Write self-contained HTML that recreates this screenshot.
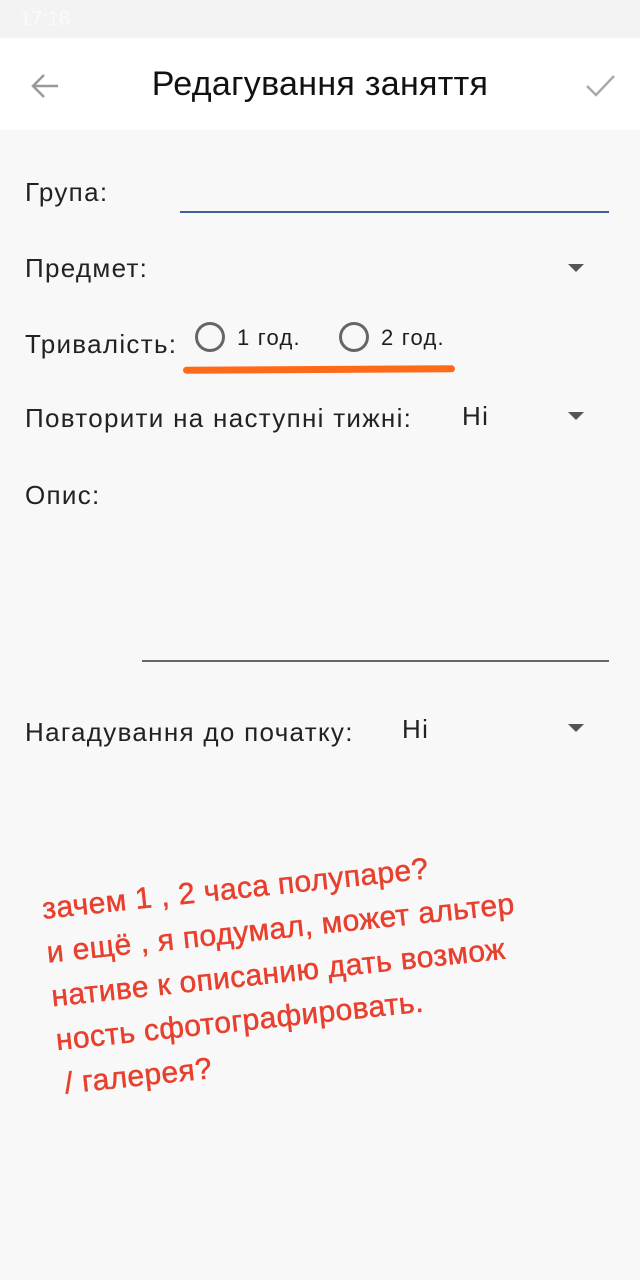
<!DOCTYPE html>
<html><head><meta charset="utf-8"><style>
*{margin:0;padding:0;box-sizing:border-box}
body{width:640px;height:1280px;background:#f8f8f8;font-family:"Liberation Sans","DejaVu Sans",sans-serif;position:relative;overflow:hidden;color:#1e1e1e}
.a{position:absolute;white-space:nowrap}
.lbl{font-size:26px;color:#222;letter-spacing:1.3px}
.tri{position:absolute;width:0;height:0;border-left:8px solid transparent;border-right:8px solid transparent;border-top:8px solid #555}
.rad{position:absolute;width:30px;height:30px;border:3px solid #666;border-radius:50%}
</style></head><body>
<div class="a" style="left:0;top:0;width:640px;height:38px;background:#f3f3f3"></div>
<div class="a" style="left:20px;top:8px;font-size:20px;color:#fafafa">17:18</div>
<div class="a" style="left:0;top:38px;width:640px;height:92px;background:#fff"></div>
<svg class="a" style="left:30px;top:72px" width="32" height="28" viewBox="0 0 32 28"><path d="M28 14H4M14 3L3 14l11 11" fill="none" stroke="#999" stroke-width="2.5"/></svg>
<div class="a" style="left:0;width:640px;text-align:center;top:65px;font-size:34px;letter-spacing:0.3px;color:#111">Редагування заняття</div>
<svg class="a" style="left:584px;top:72px" width="32" height="28" viewBox="0 0 32 28"><path d="M3 14l9 9L30 4" fill="none" stroke="#aaa" stroke-width="2.5"/></svg>

<div class="a lbl" style="left:25px;top:177px">Група:</div>
<div class="a" style="left:180px;top:211px;width:429px;height:2px;background:#3f5f9f"></div>
<div class="a lbl" style="left:25px;top:253px">Предмет:</div>
<div class="tri" style="left:568px;top:264px"></div>
<div class="a lbl" style="left:25px;top:329px">Тривалість:</div>
<div class="rad" style="left:195px;top:322px"></div>
<div class="a" style="left:237px;top:325px;font-size:22px;letter-spacing:1.2px">1 год.</div>
<div class="rad" style="left:339px;top:322px"></div>
<div class="a" style="left:381px;top:325px;font-size:22px;letter-spacing:1.2px">2 год.</div>
<div class="a" style="left:183px;top:366px;width:272px;height:7px;background:#ff6a1a;border-radius:4px;transform:rotate(-0.3deg)"></div>
<div class="a lbl" style="left:25px;top:403px">Повторити на наступні тижні:</div>
<div class="a lbl" style="left:462px;top:401px">Ні</div>
<div class="tri" style="left:568px;top:412px"></div>
<div class="a lbl" style="left:25px;top:480px">Опис:</div>
<div class="a" style="left:142px;top:660px;width:467px;height:2px;background:#666"></div>
<div class="a lbl" style="left:25px;top:717px">Нагадування до початку:</div>
<div class="a lbl" style="left:402px;top:714px">Ні</div>
<div class="tri" style="left:568px;top:724px"></div>

<div class="a" style="left:40px;top:888px;font-size:30px;line-height:44px;color:#e8402e;transform:rotate(-6deg);transform-origin:0 0;white-space:pre;letter-spacing:0.4px;-webkit-text-stroke:0.5px #e8402e">зачем 1 , 2 часа полупаре?
и ещё , я подумал, может альтер
нативе к описанию дать возмож
ность сфотографировать.
<span style="margin-left:4px">/ галерея?</span></div>
</body></html>
